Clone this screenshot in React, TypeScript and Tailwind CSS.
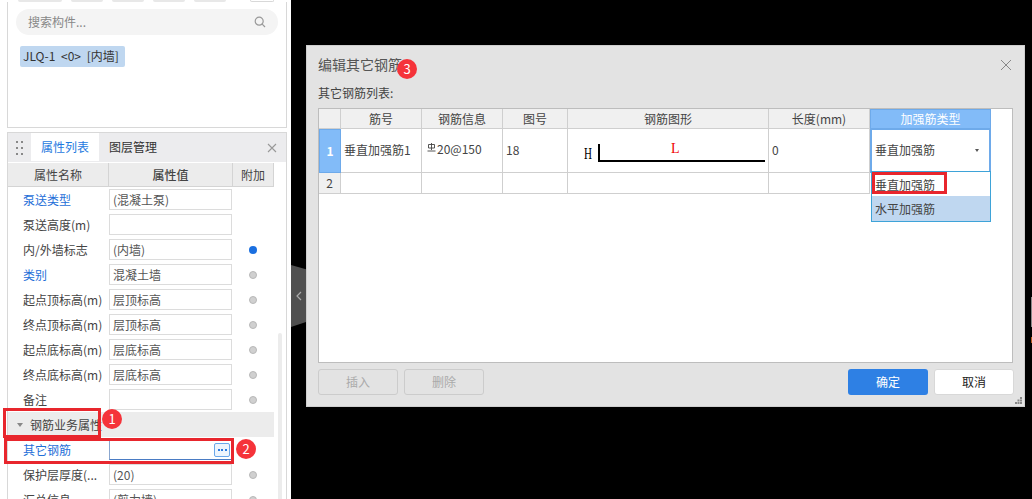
import React from "react";

const FONT = { fontFamily: '"Noto Sans CJK SC", "Liberation Sans", sans-serif' };

const rows = [
  { name: "泵送类型", value: "(混凝土泵)", link: true, dot: "" },
  { name: "泵送高度(m)", value: "", link: false, dot: "" },
  { name: "内/外墙标志", value: "(内墙)", link: false, dot: "blue" },
  { name: "类别", value: "混凝土墙", link: true, dot: "gray" },
  { name: "起点顶标高(m)", value: "层顶标高", link: false, dot: "gray" },
  { name: "终点顶标高(m)", value: "层顶标高", link: false, dot: "gray" },
  { name: "起点底标高(m)", value: "层底标高", link: false, dot: "gray" },
  { name: "终点底标高(m)", value: "层底标高", link: false, dot: "gray" },
  { name: "备注", value: "", link: false, dot: "gray" },
];

const Badge = ({ n, className }: { n: number; className: string }) => (
  <div className={`absolute w-5 h-5 rounded-full bg-[#f5333a] text-white text-[13px] leading-5 text-center ${className}`}>{n}</div>
);

const Dot = ({ kind }: { kind: string }) => {
  if (kind === "blue") return <span className="w-2 h-2 rounded-full bg-[#1a6fe0]" />;
  if (kind === "gray") return <span className="w-2 h-2 rounded-full bg-[#d0d0d0] border border-[#b8b8b8]" />;
  return null;
};

const PropRow = ({ name, value, link, dot }: { name: string; value: string; link: boolean; dot: string }) => (
  <div className="flex h-[25px] items-center shrink-0">
    <div className={`w-[101px] pl-[15px] whitespace-nowrap ${link ? "text-[#1f6fd8]" : "text-[#444]"}`}>{name}</div>
    <div className="w-[123px] h-[21px] border border-[#dcdcdc] bg-white pl-[3px] leading-[19px] text-[#555]">{value}</div>
    <div className="w-[42px] flex justify-center items-center"><Dot kind={dot} /></div>
  </div>
);

const Sidebar = () => (
  <div className="w-[291px] h-full bg-white relative overflow-hidden text-[12px] shrink-0">
    {/* toolbar remnants at very top */}
    <div className="flex gap-[9px] pl-[18px] h-[2px]">
      <div className="w-[44px] bg-[#e8e8e8] rounded-b-[2px]" />
      <div className="w-[32px] bg-[#e8e8e8] rounded-b-[2px]" />
      <div className="w-[32px] bg-[#e8e8e8] rounded-b-[2px]" />
      <div className="w-[32px] bg-[#e8e8e8] rounded-b-[2px]" />
      <div className="w-[32px] bg-[#e8e8e8] rounded-b-[2px]" />
      <div className="w-[24px] ml-[15px] bg-white border border-t-0 border-[#d8d8d8] rounded-b-[2px]" />
    </div>
    <div className="ml-[7px] mr-[4px] h-[126px] border border-t-0 border-[#d8d8d8] px-[8px] pt-[7px]">
      <div className="h-[26px] rounded-[13px] bg-[#f4f4f4] flex items-center justify-between pl-[12px] pr-[12px] text-[#888]">
        <span>搜索构件...</span>
        <svg width="12" height="12" viewBox="0 0 12 12" fill="none" stroke="#999" strokeWidth="1.2"><circle cx="5.2" cy="5.2" r="4" /><path d="M8.2 8.2 11 11" /></svg>
      </div>
      <div className="mt-[11px] ml-[4px] w-[105px] h-[21px] px-[3px] rounded-[2px] bg-[#bfd7f0] text-[#333] leading-[20px] whitespace-nowrap [word-spacing:3px]">JLQ-1 &lt;0&gt; [内墙]</div>
    </div>
    <div className="ml-[7px] mr-[4px] mt-[4px] h-[400px] border border-b-0 border-[#d8d8d8] flex flex-col relative">
      <div className="flex h-[29px] bg-[#ececee] items-stretch shrink-0">
        <div className="w-[23px] flex items-center justify-center">
          <svg width="7" height="14" viewBox="0 0 7 14" fill="#888"><rect x="0" y="0" width="2" height="2" /><rect x="5" y="0" width="2" height="2" /><rect x="0" y="6" width="2" height="2" /><rect x="5" y="6" width="2" height="2" /><rect x="0" y="12" width="2" height="2" /><rect x="5" y="12" width="2" height="2" /></svg>
        </div>
        <div className="w-[68px] mb-[1px] bg-white text-[#1f7ae0] text-center leading-[28px]">属性列表</div>
        <div className="w-[68px] text-center leading-[28px] text-[#333]">图层管理</div>
        <div className="flex-1 flex justify-end items-center pr-[9px]">
          <svg width="10" height="10" viewBox="0 0 10 10" stroke="#999" strokeWidth="1.1"><path d="M1 1l8 8M9 1l-8 8" /></svg>
        </div>
      </div>
      <div className="flex h-[24px] w-[266px] bg-[#ececec] border-b border-[#d4d4d4] mt-[1px] text-[#444] shrink-0 leading-[23px] text-center">
        <div className="w-[101px] border-r border-[#d4d4d4]">属性名称</div>
        <div className="w-[124px] border-r border-[#d4d4d4] font-medium">属性值</div>
        <div className="w-[41px] border-r border-[#d4d4d4]">附加</div>
      </div>
      <div className="flex flex-col">
        {rows.map((r) => <PropRow key={r.name} {...r} />)}
        <div className="flex h-[25px] w-[266px] items-center bg-[#ececec] shrink-0 text-[#444]">
          <span className="ml-[9px] mr-[7px] w-0 h-0 border-x-[3px] border-x-transparent border-t-[4px] border-t-[#888]" />
          钢筋业务属性
        </div>
        <div className="flex h-[25px] items-center shrink-0">
          <div className="w-[101px] pl-[15px] text-[#1f6fd8]">其它钢筋</div>
          <div className="w-[123px] h-[21px] border border-transparent border-b-[#4a7cc4] border-l-[#8aa6cf] bg-white flex justify-end items-center pr-[1px]">
            <div className="w-[16px] h-[14px] border border-[#6aa7ea] rounded-[2px] bg-[#eef5fd] flex items-center justify-center gap-[1.5px]">
              <span className="w-[2px] h-[2px] bg-[#2b7be0]" /><span className="w-[2px] h-[2px] bg-[#2b7be0]" /><span className="w-[2px] h-[2px] bg-[#2b7be0]" />
            </div>
          </div>
        </div>
        <PropRow name="保护层厚度(..." value="(20)" link={false} dot="gray" />
        <PropRow name="汇总信息" value="(剪力墙)" link={false} dot="gray" />
      </div>
      <div className="absolute right-[4px] top-[200px] bottom-0 w-[4px] rounded-full bg-[#ececec]" />
    </div>
    <div className="absolute left-[3px] top-[408px] w-[98px] h-[30px] border-[3px] border-[#e8262d]" />
    <div className="absolute left-[4px] top-[438px] w-[230px] h-[26px] border-[3px] border-[#e8262d]" />
    <Badge n={1} className="left-[102px] top-[409px]" />
    <Badge n={2} className="left-[236px] top-[439px]" />
  </div>
);

const cellB = "border-r border-b border-[#cfcfcf]";

const Dialog = () => (
  <div className="relative w-[719px] h-[362px] ml-[15px] bg-[#e3e3e3] border border-[#cfcfcf] text-[12px] text-[#444]">
    <div className="h-[37px] pl-[11px] pt-[8px] text-[14px] leading-[20px] text-[#555]">编辑其它钢筋</div>
    <div className="pl-[11px] h-[22px] leading-[14px] mt-[3px]">其它钢筋列表:</div>
    <div className="mx-[11px] h-[255px] bg-white border border-[#bdbdbd] overflow-hidden">
      <div className="flex h-[20px]">
        <div className={`w-[22px] bg-[#f0f0f0] ${cellB}`} />
        <div className={`w-[81px] bg-[#f0f0f0] text-center leading-[19px] ${cellB}`}>筋号</div>
        <div className={`w-[81px] bg-[#f0f0f0] text-center leading-[19px] ${cellB}`}>钢筋信息</div>
        <div className={`w-[65px] bg-[#f0f0f0] text-center leading-[19px] ${cellB}`}>图号</div>
        <div className={`w-[201px] bg-[#f0f0f0] text-center leading-[19px] ${cellB}`}>钢筋图形</div>
        <div className={`w-[101px] bg-[#f0f0f0] text-center leading-[19px] ${cellB}`}>长度(mm)</div>
        <div className="w-[121px] bg-[#82bbf8] border border-[#6eaaea] text-white text-center leading-[18px]">加强筋类型</div>
      </div>
      <div className="flex h-[44px]">
        <div className="w-[22px] bg-[#82bbf8] border border-[#6eaaea] text-white font-bold flex items-center justify-center">1</div>
        <div className={`w-[81px] pl-[3px] pb-[1px] flex items-center whitespace-nowrap ${cellB}`}>垂直加强筋1</div>
        <div className={`w-[81px] pl-[5px] pb-[3px] flex items-center whitespace-nowrap ${cellB}`}>
          {/* HRB400 rebar grade symbol */}
          <svg className="mb-[3px] mr-[1px]" width="9" height="9" viewBox="0 0 9 9" fill="none" stroke="#444" strokeWidth="0.9"><path d="M1.5 1.5h6v3.5h-6zM4.5 0v7M0.5 8h8" /></svg>
          20@150
        </div>
        <div className={`w-[65px] pl-[3px] pb-[1px] flex items-center ${cellB}`}>18</div>
        <div className={`w-[201px] relative ${cellB}`}>
          <span className="absolute left-[16px] top-[17px] text-[11px] leading-[14px] text-black scale-y-150" style={{ fontFamily: '"Liberation Serif", serif' }}>H</span>
          <div className="absolute left-[30px] top-[15px] w-[167px] h-[18px] border-l-2 border-b-2 border-black" />
          <span className="absolute left-[103px] top-[12px] text-[14px] leading-[16px] text-[#f00000]" style={{ fontFamily: '"Liberation Serif", serif' }}>L</span>
        </div>
        <div className={`w-[101px] pl-[3px] pb-[1px] flex items-center ${cellB}`}>0</div>
        <div className="w-[121px] border-2 border-t-[1px] border-[#6eaaea] flex items-center justify-between pl-[3px] pr-[10px] pb-[1px]">
          <span>垂直加强筋</span>
          <span className="w-0 h-0 border-x-[2.5px] border-x-transparent border-t-[3px] border-t-[#555]" />
        </div>
      </div>
      <div className="flex h-[21px] text-[#444]">
        <div className={`w-[22px] bg-[#f0f0f0] text-center leading-[20px] ${cellB}`}>2</div>
        <div className={`w-[81px] ${cellB}`} />
        <div className={`w-[81px] ${cellB}`} />
        <div className={`w-[65px] ${cellB}`} />
        <div className={`w-[201px] ${cellB}`} />
        <div className={`w-[101px] ${cellB}`} />
      </div>
    </div>
    <div className="flex justify-between pl-[11px] pr-[10px] mt-[6px]">
      <div className="flex gap-[6px]">
        <div className="w-[80px] h-[26px] rounded-[3px] border border-[#cccccc] text-[#aaa] text-center leading-[24px]">插入</div>
        <div className="w-[80px] h-[26px] rounded-[3px] border border-[#cccccc] text-[#aaa] text-center leading-[24px]">删除</div>
      </div>
      <div className="flex gap-[6px]">
        <div className="w-[80px] h-[26px] rounded-[3px] bg-[#2e80e4] text-white text-center leading-[26px]">确定</div>
        <div className="w-[80px] h-[26px] rounded-[3px] bg-white border border-[#d8d8d8] text-[#222] text-center leading-[24px]">取消</div>
      </div>
    </div>
    {/* dropdown list hanging off the type cell */}
    <div className="absolute left-[564px] top-[125px] w-[120px] h-[51px] border border-[#3ea3d8] bg-white">
      <div className="h-[24px] pl-[3px] leading-[25px]">垂直加强筋</div>
      <div className="h-[25px] pl-[3px] leading-[25px] bg-[#bfd7f0]">水平加强筋</div>
    </div>
    <div className="absolute left-[565px] top-[126px] w-[75px] h-[22px] border-[3px] border-[#e8262d]" />
    <Badge n={3} className="left-[90px] top-[13px]" />
    <svg className="absolute right-[12px] top-[13px]" width="12" height="12" viewBox="0 0 12 12" stroke="#888" strokeWidth="1"><path d="M1 1l10 10M11 1L1 11" /></svg>
    <svg className="absolute right-[2px] bottom-[2px]" width="7" height="7" viewBox="0 0 7 7" fill="#888"><rect x="5" y="0" width="2" height="2" /><rect x="2.5" y="2.5" width="2" height="2" /><rect x="5" y="2.5" width="2" height="2" /><rect x="0" y="5" width="2" height="2" /><rect x="2.5" y="5" width="2" height="2" /><rect x="5" y="5" width="2" height="2" /></svg>
  </div>
);

export default function App() {
  return (
    <div className="w-[1032px] h-[499px] bg-black flex overflow-hidden relative" style={FONT}>
      <Sidebar />
      <div className="flex-1 pt-[45px]">
        <Dialog />
      </div>
      {/* collapse handle on the canvas edge */}
      <div className="absolute left-[291px] top-[265px] w-[15px] h-[62px] bg-[#505050] flex items-center justify-center" style={{ clipPath: "polygon(0 0, 100% 7%, 100% 92%, 0 100%)" }}>
        <svg width="6" height="10" viewBox="0 0 6 10" fill="none" stroke="#aaa" strokeWidth="1.2"><path d="M5 1 1 5l4 4" /></svg>
      </div>
      {/* bits of the canvas showing at the right edge */}
      <div className="absolute right-0 top-[297px] w-[1px] h-[30px] bg-[#888]" />
      <div className="absolute right-0 top-[337px] w-[1px] h-[6px] bg-[#b85a20]" />
    </div>
  );
}
